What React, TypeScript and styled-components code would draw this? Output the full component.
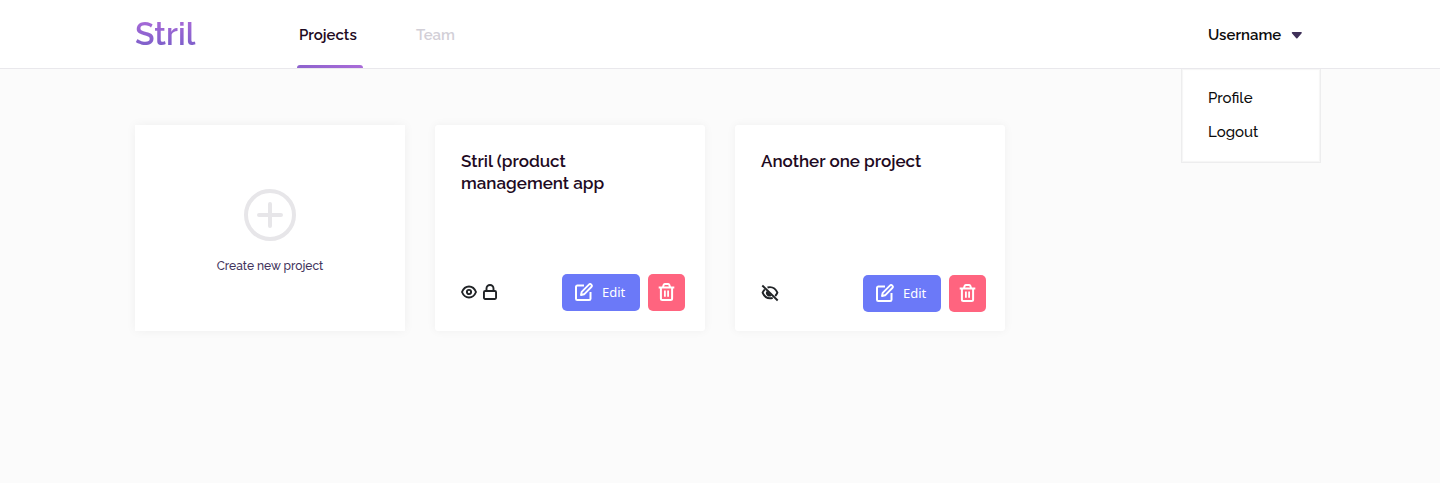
import React from "react";
import styled, { createGlobalStyle } from "styled-components";

const GlobalStyle = createGlobalStyle`
  * { box-sizing: border-box; }
  body {
    margin: 0;
    background: #fbfbfb;
    font-family: Raleway, Lato, sans-serif;
    color: #0c0c0c;
  }
`;

const Page = styled.div`
  min-height: 483px;
`;

const Header = styled.header`
  display: flex;
  height: 69px;
  padding: 0 119px 0 135px;
  background: #fff;
  border-bottom: 1px solid #e9e8ec;
`;

const Logo = styled.a`
  width: 162px;
  height: 68px;
  line-height: 68px;
  font-size: 32px;
  font-weight: 600;
  background: linear-gradient(#a869d8 20px, #7b5fc9 48px);
  background-clip: text;
  -webkit-background-clip: text;
  color: transparent;
`;

const Nav = styled.nav`
  display: flex;
  flex: 1;
  gap: 51px;
`;

const NavItem = styled.a<{ $active?: boolean }>`
  display: flex;
  flex-direction: column;
  justify-content: space-between;
  height: 68px;
  width: 66px;
  padding: 25px 0 0 2px;
  font-size: 15px;
  line-height: 20px;
  font-weight: 600;
  color: ${(p) => (p.$active ? "#1e0a22" : "#d2cfd7")};
`;

const ActiveBar = styled.span`
  height: 3px;
  margin-left: -2px;
  border-radius: 3px 3px 0 0;
  background: linear-gradient(90deg, #8d62cd, #a96bd8);
`;

const UserMenu = styled.div`
  position: relative;
  width: 140px;
`;

const UserToggle = styled.button`
  display: flex;
  align-items: center;
  gap: 10px;
  height: 68px;
  padding: 2px 0 0 27px;
  border: 0;
  background: none;
  font: 600 15px/20px Raleway, Lato, sans-serif;
  color: #0c0c0c;
`;

const Dropdown = styled.div`
  position: absolute;
  top: 69px;
  left: 0;
  width: 140px;
  height: 94px;
  padding: 12px 0 0 26px;
  background: #fff;
  border: 1px solid #ededee;
  border-top: 0;
  box-shadow: inset 0 0 1px 1px #f6f6f6;
`;

const DropdownItem = styled.a`
  display: block;
  height: 34px;
  line-height: 34px;
  font-size: 15px;
  font-weight: 500;
`;

const Projects = styled.main`
  display: flex;
  gap: 30px;
  padding: 56px 135px;
`;

const Card = styled.article`
  display: flex;
  flex-direction: column;
  width: 270px;
  height: 206px;
  background: #fff;
  border-radius: 3px;
  box-shadow: 0 0 10px rgba(0, 0, 0, 0.05);
`;

const CreateCard = styled(Card)`
  align-items: center;
  padding-top: 64px;
  border-radius: 0;
`;

const CreateLabel = styled.span`
  margin-top: 16px;
  font-size: 12px;
  line-height: 18px;
  font-weight: 500;
  color: #41325b;
`;

const ProjectCard = styled(Card)<{ $low?: boolean }>`
  justify-content: space-between;
  padding: ${(p) => (p.$low ? "25px 19px 19px 26px" : "25px 20px 20px 26px")};
`;

const Title = styled.h2`
  width: 190px;
  margin: 0;
  font-size: 17px;
  line-height: 22px;
  font-weight: 600;
  color: #1e0a22;
`;

const CardFooter = styled.footer`
  display: flex;
  align-items: center;
  gap: 8px;
  height: 37px;
`;

const Status = styled.div`
  display: flex;
  flex: 1;
  align-items: center;
  gap: 6px;
  padding-bottom: 2px;
  color: #202326;
`;

const Button = styled.button<{ $danger?: boolean }>`
  display: flex;
  align-items: center;
  gap: 9px;
  width: ${(p) => (p.$danger ? "37px" : "78px")};
  height: 37px;
  padding: 0 0 1px ${(p) => (p.$danger ? "10px" : "13px")};
  border: 0;
  border-radius: 5px;
  background: ${(p) => (p.$danger ? "#ff647f" : "#6b79f8")};
  color: #fff;
`;

const ButtonLabel = styled.span`
  font-family: "Noto Sans", sans-serif;
  font-size: 13px;
  line-height: 18px;
  font-weight: 400;
`;

const Eye = () => (
  <svg width="16" height="14" viewBox="0 0 16 14" fill="none" stroke="currentColor" strokeWidth="1.9">
    <path d="M1 7C2.500 3.200 5 1.500 8 1.500S13.500 3.200 15 7C13.500 10.800 11 12.500 8 12.500S2.500 10.800 1 7Z" strokeLinejoin="round" />
    <circle cx="8" cy="7" r="2.100" />
  </svg>
);

const Lock = () => (
  <svg width="14" height="16" viewBox="0 0 14 16" fill="none" stroke="currentColor" strokeWidth="1.9">
    <rect x="0.950" y="7" width="12.100" height="8" rx="1.200" />
    <path d="M3.500 7V4.500a3.500 3.500 0 0 1 7 0V7" />
  </svg>
);

const EyeOff = () => (
  <svg width="18" height="18" viewBox="0 0 18 18" fill="none" stroke="currentColor" strokeWidth="1.9">
    <path d="M1.300 1.500L16.700 16.500" />
    <path d="M6.500 3.500A8 8 0 0 1 9 3.100C12 3.100 14.900 5.200 16.400 8.700A11 11 0 0 1 14.200 12" />
    <path d="M3.800 5.300A10.500 10.500 0 0 0 1.600 8.700C3.100 12.200 6 14.300 9 14.300A8 8 0 0 0 11.700 13.800" />
    <path d="M6 6.700A3.200 3.200 0 0 0 10.700 11.400Z" fill="currentColor" stroke="none" />
  </svg>
);

const EditIcon = () => (
  <svg width="18" height="18" viewBox="0 0 18 18" fill="none" stroke="currentColor" strokeWidth="2" strokeLinejoin="round">
    <path d="M9 2.600H2.300a1.300 1.300 0 0 0-1.300 1.300V15.700A1.300 1.300 0 0 0 2.300 17H14.200a1.300 1.300 0 0 0 1.300-1.300V9" />
    <path d="M6 12L6.700 8.800L13.900 1.600a1.550 1.550 0 0 1 2.400 2.400L9.100 11.300Z" strokeWidth="1.900" />
  </svg>
);

const Trash = () => (
  <svg width="17" height="18" viewBox="0 0 17 18" fill="none" stroke="currentColor" strokeWidth="2" strokeLinejoin="round">
    <path d="M0.700 4.500H16.300" />
    <path d="M5 4.300L5.600 2A1.300 1.300 0 0 1 6.800 1.100H10.200A1.300 1.300 0 0 1 11.400 2L12 4.300" />
    <path d="M2.900 4.500V15.500A1.500 1.500 0 0 0 4.400 17H12.600A1.500 1.500 0 0 0 14.100 15.500V4.500" />
    <path d="M6.900 7.500V13.800M10.100 7.500V13.800" strokeWidth="1.800" />
  </svg>
);

const Plus = () => (
  <svg width="52" height="52" viewBox="0 0 52 52" fill="none" stroke="#e7e6e9" strokeWidth="4" strokeLinecap="round">
    <circle cx="26" cy="26" r="24" />
    <path d="M15 26H37M26 15V37" />
  </svg>
);

const Caret = () => (
  <svg width="11" height="7" viewBox="0 0 11 7">
    <path d="M1.500 .8H10.100L5.800 5.800Z" fill="#3f3059" stroke="#3f3059" strokeWidth="1.500" strokeLinejoin="round" />
  </svg>
);

interface ProjectProps {
  title: string;
  low?: boolean;
  children: React.ReactNode;
}

const Project = ({ title, low, children }: ProjectProps) => (
  <ProjectCard $low={low}>
    <Title>{title}</Title>
    <CardFooter>
      <Status>{children}</Status>
      <Button>
        <EditIcon />
        <ButtonLabel>Edit</ButtonLabel>
      </Button>
      <Button $danger aria-label="Delete">
        <Trash />
      </Button>
    </CardFooter>
  </ProjectCard>
);

export default function App() {
  return (
    <Page>
      <GlobalStyle />
      <Header>
        <Logo>Stril</Logo>
        <Nav>
          <NavItem $active>
            Projects
            <ActiveBar />
          </NavItem>
          <NavItem>Team</NavItem>
        </Nav>
        <UserMenu>
          <UserToggle>
            Username
            <Caret />
          </UserToggle>
          <Dropdown>
            <DropdownItem>Profile</DropdownItem>
            <DropdownItem>Logout</DropdownItem>
          </Dropdown>
        </UserMenu>
      </Header>
      <Projects>
        <CreateCard>
          <Plus />
          <CreateLabel>Create new project</CreateLabel>
        </CreateCard>
        <Project title="Stril (product management app">
          <Eye />
          <Lock />
        </Project>
        <Project title="Another one project" low>
          <EyeOff />
        </Project>
      </Projects>
    </Page>
  );
}
